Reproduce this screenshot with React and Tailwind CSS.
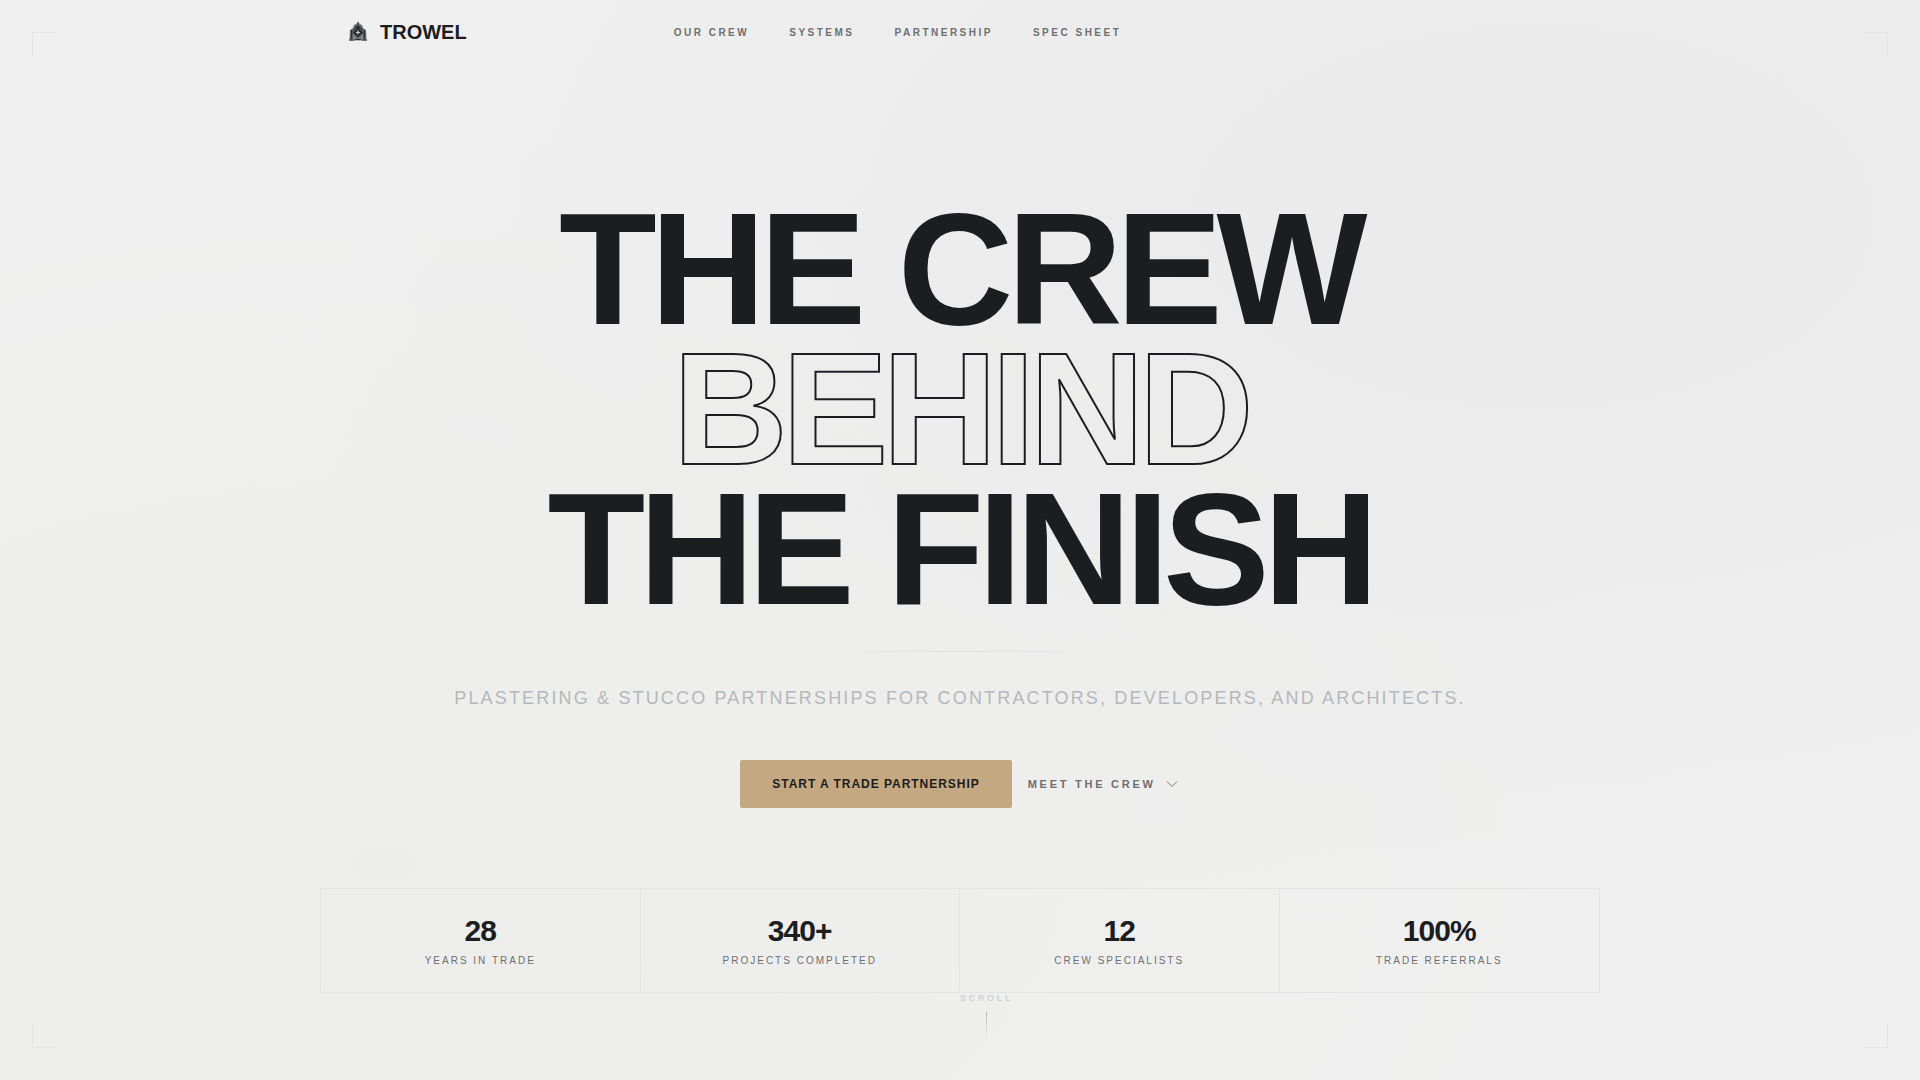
import clsx from 'clsx';

const links = [
    { label: "Our Crew", href: "#crew" },
    { label: "Systems", href: "#systems" },
    { label: "Partnership", href: "#partnership" },
    { label: "Spec Sheet", href: "#specs" },
];

const stats = [
    { value: "28", label: "Years in Trade" },
    { value: "340+", label: "Projects Completed" },
    { value: "12", label: "Crew Specialists" },
    { value: "100%", label: "Trade Referrals" },
];

const corners = [
    "top-8 left-8 border-t border-l",
    "top-8 right-8 border-t border-r",
    "bottom-8 left-8 border-b border-l",
    "bottom-8 right-8 border-b border-r",
];

const Logo = () => (
    <svg viewBox="0 0 20 22" className="w-5 h-[22px]" aria-hidden="true">
        <path d="M10 0 L11.3 2.6 L14.5 4.4 L15 7 L18 9 L18.6 19.5 H1.4 L2 9 L5 7 L5.5 4.4 L8.7 2.6 Z" fill="#77787a" />
        <path d="M10 2 V6 M7.5 5 L10 7.5 L12.5 5 M5 9 L10 5.5 L15 9" stroke="#2c2d30" strokeWidth="1.2" fill="none" />
        <path d="M10 6.4 L15.4 11.4 L10 16.4 L4.6 11.4 Z" fill="#26272a" />
        <path d="M10 9.2 V13.6 M7.8 11.4 H12.2" stroke="#d8d8d8" strokeWidth="1" />
        <path d="M3.6 9 V18 M16.4 9 V18" stroke="#2c2d30" strokeWidth="1.5" />
        <path d="M5.8 15.5 V19 M14.2 15.5 V19 M8.5 17 V19 M11.5 17 V19" stroke="#b4b4b4" strokeWidth="0.7" />
        <path d="M1 19 H6.2 M13.8 19 H19 M7.4 18.4 H12.6" stroke="#2c2d30" strokeWidth="1.2" />
    </svg>
);

const App = () => {
    return (
        <div className="relative min-h-screen flex flex-col overflow-hidden bg-[#f0f0f0] bg-[radial-gradient(ellipse_at_80%_20%,#eaeaea_0%,transparent_60%),radial-gradient(ellipse_at_20%_80%,#ededeb_0%,transparent_60%)] font-['Liberation_Sans',Arial,sans-serif] text-[#1c1d20]">
            {corners.map((item) => (
                <span key={item} className={clsx("absolute size-6 border-[#e3e4e4]", item)} />
            ))}

            <header className="w-full max-w-7xl mx-auto h-16 px-7 flex items-center gap-[207px]">
                <a href="#top" className="flex items-center gap-3">
                    <Logo />
                    <span className="text-xl leading-none font-bold">TROWEL</span>
                </a>
                <nav className="flex gap-10">
                    {links.map((item) => (
                        <a key={item.href} href={item.href} className="text-[10px] font-bold uppercase tracking-[0.25em] text-[#6e6f71]">{item.label}</a>
                    ))}
                </nav>
            </header>

            <main className="w-full max-w-7xl mx-auto pt-[135px] flex flex-col items-center">
                <h1 className="text-[160px] leading-[140px] font-bold uppercase tracking-[-0.04em] text-center">
                    <span className="block">The Crew</span>
                    <span className="block text-transparent [-webkit-text-stroke:2px_#1c1d20]">Behind</span>
                    <span className="block">The Finish</span>
                </h1>

                <div className="mt-8 w-60 h-px bg-linear-to-r from-transparent via-[#dedfdf] to-transparent" />

                <p className="mt-8 text-lg uppercase tracking-[0.12em] text-center text-[#b5b8bb]">
                    Plastering &amp; stucco partnerships for contractors, developers, and architects.
                </p>

                <div className="mt-12 flex items-center gap-4">
                    <button className="h-12 px-8 rounded-xs bg-[#c4a882] text-xs font-bold uppercase tracking-[0.08em] cursor-pointer">Start a Trade Partnership</button>
                    <a href="#crew" className="flex items-center gap-2 text-[11px] font-bold uppercase tracking-[0.25em] text-[#6e6f71]">
                        Meet the Crew
                        <svg viewBox="0 0 16 16" className="size-4" fill="none" stroke="currentColor" strokeWidth="0.9" aria-hidden="true">
                            <path d="M3 5.5 L8 10.5 L13 5.5" />
                        </svg>
                    </a>
                </div>

                <dl className="mt-20 w-full grid grid-cols-4 border border-[#e3e4e4]">
                    {stats.map((item) => (
                        <div key={item.label} className="h-[103px] py-6 border-r border-[#e3e4e4] last:border-r-0 flex flex-col-reverse items-center justify-end gap-1 text-center">
                            <dt className="text-[10px] leading-4 uppercase tracking-[0.2em] text-[#6e6f71]">{item.label}</dt>
                            <dd className="text-3xl leading-9 font-bold tracking-[-0.03em]">{item.value}</dd>
                        </div>
                    ))}
                </dl>
            </main>

            <div className="absolute bottom-10 left-1/2 flex flex-col items-center gap-2">
                <span className="text-[9px] leading-3 font-bold uppercase tracking-[0.3em] text-[#cfd1d2]">Scroll</span>
                <span className="w-px h-7 bg-linear-to-b from-[#b5b8bb] to-transparent" />
            </div>
        </div>
    );
};
export default App;
